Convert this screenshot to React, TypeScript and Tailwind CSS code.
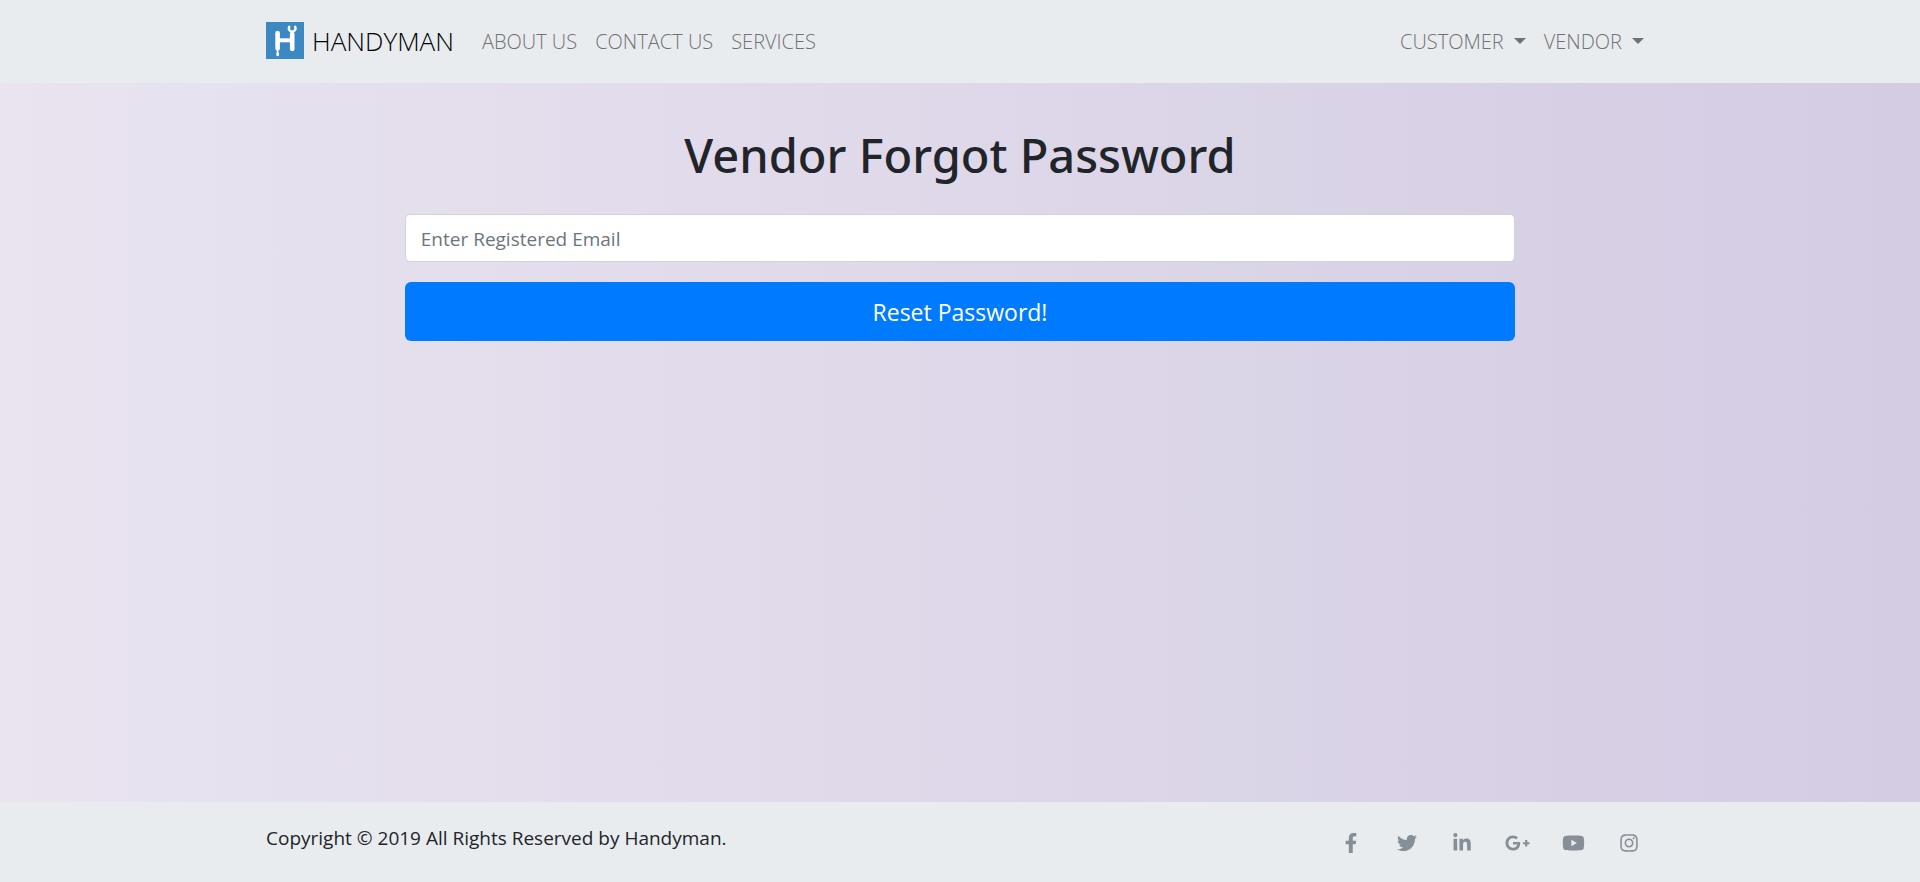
import React from "react";
import {
  FaFacebookF,
  FaTwitter,
  FaLinkedinIn,
  FaGooglePlusG,
  FaYoutube,
  FaInstagram,
} from "react-icons/fa";

const links = ["ABOUT US", "CONTACT US", "SERVICES"];
const menus = ["CUSTOMER", "VENDOR"];
const socials = [
  { label: "Facebook", Icon: FaFacebookF, width: "w-5" },
  { label: "Twitter", Icon: FaTwitter, width: "w-5" },
  { label: "LinkedIn", Icon: FaLinkedinIn, width: "w-5" },
  { label: "Google Plus", Icon: FaGooglePlusG, width: "w-[25px]" },
  { label: "YouTube", Icon: FaYoutube, width: "w-[23px]" },
  { label: "Instagram", Icon: FaInstagram, width: "w-5" },
];

function Logo() {
  return (
    <svg viewBox="0 0 38 37" className="mb-0.5 h-[37px] w-[38px]" aria-hidden="true">
      <rect width="38" height="37" fill="#3b88c3" />
      <g fill="none" stroke="#fff" strokeLinecap="round">
        <path d="M11.6 11v15.500M26.200 12v15" strokeWidth="4.600" />
        <path d="M12 18.300h14" strokeWidth="4" strokeLinecap="butt" />
        <path d="M11.600 28v3.200" strokeWidth="1.600" />
        <path d="M11.700 31.600v1.400" strokeWidth="2.600" />
        <path d="M23.200 4.800c-1 2.400.4 4.700 3 4.700s4-2.300 3-4.700" strokeWidth="2.400" />
      </g>
    </svg>
  );
}

function Caret() {
  return (
    <span className="mb-0.5 h-0 w-0 border-x-[6px] border-t-[6px] border-x-transparent border-t-current" />
  );
}

export default function App() {
  return (
    <div className="flex min-h-screen flex-col bg-[linear-gradient(to_right,#e9e4f0,#d3cce3)] font-['Open_Sans','Noto_Sans',sans-serif] text-[#212529]">
      <header className="bg-[#e9ecef]">
        <nav className="mx-auto flex h-[83px] max-w-[1388px] items-center text-xl font-light text-[#6f7274]">
          <a href="#" className="flex items-center gap-2 text-[26px] text-black">
            <Logo />
            HANDYMAN
          </a>
          <ul className="ml-7 flex gap-[18px]">
            {links.map((link) => (
              <li key={link}>
                <a href="#">{link}</a>
              </li>
            ))}
          </ul>
          <ul className="mr-[10px] ml-auto flex gap-[18px]">
            {menus.map((menu) => (
              <li key={menu}>
                <button type="button" className="flex items-center gap-2.5">
                  {menu}
                  <Caret />
                </button>
              </li>
            ))}
          </ul>
        </nav>
      </header>

      <main className="mx-auto w-full max-w-[1388px] grow pt-10">
        <h1 className="text-center font-['Noto_Sans','Open_Sans',sans-serif] text-[47px] leading-[64px] font-medium">
          Vendor Forgot Password
        </h1>
        <form className="mx-auto mt-[27px] w-4/5" onSubmit={(e) => e.preventDefault()}>
          <input
            type="email"
            aria-label="Registered email"
            placeholder="Enter Registered Email"
            className="block h-[48px] w-full rounded-[5px] border border-[#ced4da] bg-white px-[15px] pt-0.5 text-[19px] placeholder:text-[#6c757d]"
          />
          <button
            type="submit"
            className="mt-5 block h-[59px] w-full rounded-md bg-[#007bff] pt-0.5 text-[23px] text-white"
          >
            Reset Password!
          </button>
        </form>
      </main>

      <footer className="bg-[#e9ecef]">
        <div className="mx-auto flex h-20 max-w-[1388px] items-start justify-between pt-[22px]">
          <p className="text-[19px] leading-7">
            Copyright © 2019 All Rights Reserved by Handyman.
          </p>
          <ul className="flex w-[328px] justify-between pt-[9px] text-[#868e96]">
            {socials.map(({ label, Icon, width }) => (
              <li key={label}>
                <a href="#" aria-label={label} className="flex w-[50px] justify-center">
                  <Icon className={`h-5 ${width}`} />
                </a>
              </li>
            ))}
          </ul>
        </div>
      </footer>
    </div>
  );
}
